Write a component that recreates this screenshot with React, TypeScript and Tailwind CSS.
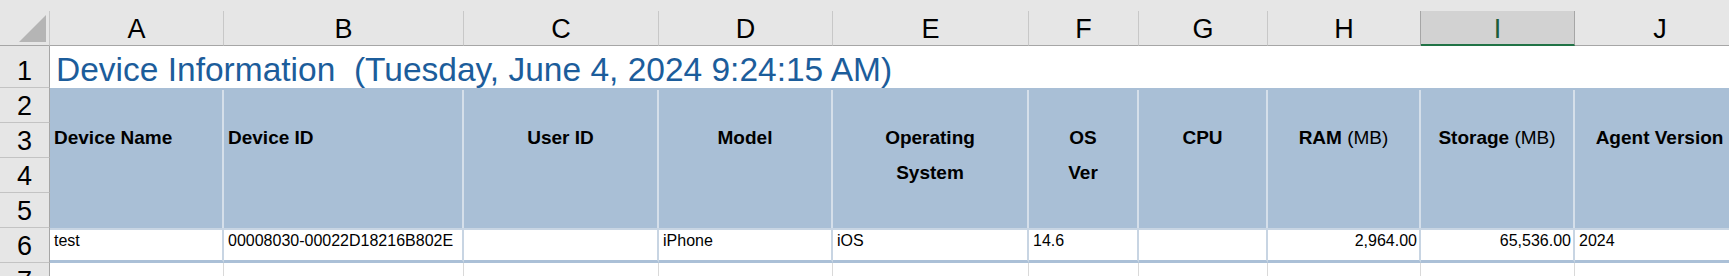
import React from 'react';

interface Column {
    key: string;
    width: string;
    header: React.ReactNode;
    align: 'left' | 'center' | 'right';
    value?: string;
    valueAlign?: 'left' | 'right';
    selected?: boolean;
    darkEdge?: boolean;
}

const columns: Column[] = [
    { key: 'A', width: 'w-[174px]', header: 'Device Name', align: 'left', value: 'test' },
    { key: 'B', width: 'w-[240px]', header: 'Device ID', align: 'left', value: '00008030-00022D18216B802E' },
    { key: 'C', width: 'w-[195px]', header: 'User ID', align: 'center' },
    { key: 'D', width: 'w-[174px]', header: 'Model', align: 'center', value: 'iPhone' },
    { key: 'E', width: 'w-[196px]', header: (<>Operating<br />System</>), align: 'center', value: 'iOS' },
    { key: 'F', width: 'w-[110px]', header: (<>OS<br />Ver</>), align: 'center', value: '14.6' },
    { key: 'G', width: 'w-[129px]', header: 'CPU', align: 'center' },
    {
        key: 'H',
        width: 'w-[153px]',
        header: (<>RAM <span className="font-normal">(MB)</span></>),
        align: 'center',
        value: '2,964.00',
        valueAlign: 'right',
        darkEdge: true,
    },
    {
        key: 'I',
        width: 'w-[154px]',
        header: (<>Storage <span className="font-normal">(MB)</span></>),
        align: 'center',
        value: '65,536.00',
        valueAlign: 'right',
        selected: true,
        darkEdge: true,
    },
    { key: 'J', width: 'w-[171px]', header: 'Agent Version', align: 'center', value: '2024' },
];

const alignClass = {
    left: 'text-left pl-[4px]',
    center: 'text-center',
    right: 'text-right pr-[2px]',
};

const RowHeader: React.FC<{ label: string; height: string }> = ({ label, height }) => (
    <div
        className={`${height} w-[50px] shrink-0 flex items-end justify-center pb-[2px] bg-[#e6e6e6] border-r border-b border-r-[#a6a6a6] border-b-[#c3c3c3] text-[27px] leading-none text-black`}
    >
        {label}
    </div>
);

export default function App() {
    return (
        <div className="w-[1729px] h-[276px] overflow-hidden bg-white font-['Liberation_Sans',Arial,sans-serif] text-black">
            {/* Column letters */}
            <div className="flex items-end h-[46px] bg-[#e6e6e6]">
                <div className="w-[50px] h-[35px] shrink-0 flex items-end justify-end pr-[3px] pb-[3px] border-r border-b border-r-[#c8c8c8] border-b-[#a6a6a6]">
                    <svg width="27" height="27" viewBox="0 0 27 27">
                        <polygon points="27,0 27,27 0,27" fill="#b5b5b5" />
                    </svg>
                </div>
                {columns.map((col) => (
                    <div
                        key={col.key}
                        className={`${col.width} h-[35px] shrink-0 flex items-end justify-center text-[27px] leading-none border-r ${
                            col.darkEdge ? 'border-r-[#a6a6a6]' : 'border-r-[#c8c8c8]'
                        } ${
                            col.selected
                                ? 'bg-[#d2d2d2] border-b-2 border-b-[#217346] pb-[1px] text-[#1b5e3a]'
                                : 'border-b border-b-[#a6a6a6] pb-[2px]'
                        }`}
                    >
                        {col.key}
                    </div>
                ))}
            </div>

            {/* Row 1: title */}
            <div className="flex h-[42px]">
                <RowHeader label="1" height="h-[42px]" />
                <div className="flex-1 flex items-end pb-[2px] pl-[6px] text-[33.5px] leading-none text-[#1c5d9b] whitespace-nowrap">
                    Device Information&nbsp;&nbsp;(Tuesday, June 4, 2024 9:24:15 AM)
                </div>
            </div>

            {/* Rows 2-5: table header */}
            <div className="flex h-[140px]">
                <div className="flex flex-col w-[50px] shrink-0">
                    <RowHeader label="2" height="h-[35px]" />
                    <RowHeader label="3" height="h-[35px]" />
                    <RowHeader label="4" height="h-[35px]" />
                    <RowHeader label="5" height="h-[35px]" />
                </div>
                <div className="flex bg-[#a9bfd6] pt-[2px]">
                    {columns.map((col) => (
                        <div
                            key={col.key}
                            className={`${col.width} shrink-0 h-full border-r-2 border-[#d5dfea] pt-[30px] text-[19px] leading-[35px] font-bold whitespace-nowrap ${alignClass[col.align]}`}
                        >
                            {col.header}
                        </div>
                    ))}
                </div>
            </div>

            {/* Row 6: data */}
            <div className="flex h-[35px]">
                <RowHeader label="6" height="h-[35px]" />
                {columns.map((col) => (
                    <div
                        key={col.key}
                        className={`${col.width} shrink-0 h-full bg-white border-t-2 border-r-2 border-b-[3px] border-t-[#c8d5e3] border-r-[#c8d5e3] border-b-[#abc0d7] pt-px text-[16px] leading-[20px] whitespace-nowrap ${
                            col.valueAlign === 'right' ? alignClass.right : alignClass.left
                        }`}
                    >
                        {col.value}
                    </div>
                ))}
            </div>

            {/* Row 7: empty */}
            <div className="flex h-[35px]">
                <RowHeader label="7" height="h-[35px]" />
                {columns.map((col) => (
                    <div key={col.key} className={`${col.width} shrink-0 h-full bg-white border-r border-[#d9d9d9]`} />
                ))}
            </div>
        </div>
    );
}
